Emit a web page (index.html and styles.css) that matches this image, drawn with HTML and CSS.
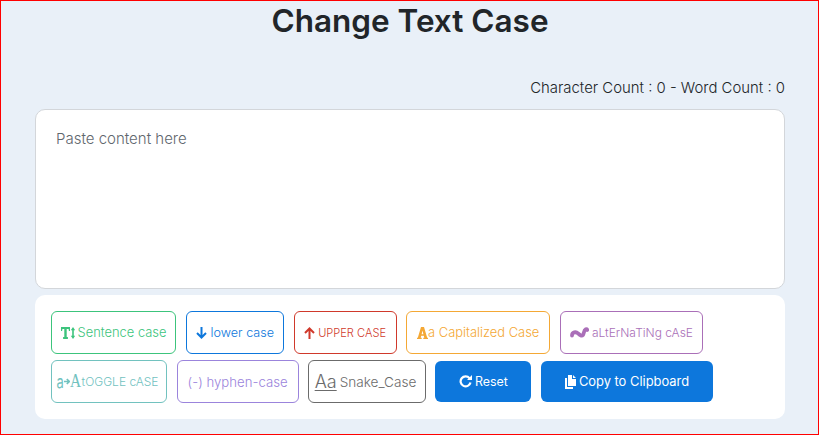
FILE: index.html
```html
<!DOCTYPE html>
<html lang="en">

<head>
  <meta charset="UTF-8">
  <title>Change Text Case</title>
  <link rel="stylesheet" href="styles.css">
</head>

<body>
  <div class="container">
    <h1>Change Text Case</h1>
    <p class="counts">Character Count : 0 - Word Count : 0</p>
    <textarea class="content-box" placeholder="Paste content here"></textarea>

    <div class="tools">
      <button class="btn sentence">
        <svg class="icon" width="14" height="12" viewBox="0 0 14 12"><path fill="currentColor" d="M0 0h9v4H7.900L7.600 2H5.700v8h1.200v2H2.100v-2h1.200V2H1.400L1.100 4H0zM12 0l2.200 3.200h-1.400v5.600h1.400L12 12l-2.200-3.200h1.400V3.200H9.800z"/></svg>
        Sentence case
      </button>
      <button class="btn lower">
        <svg class="icon" width="11" height="12" viewBox="0 0 11 12"><path fill="none" stroke="currentColor" stroke-width="2" d="M5.500 0v10.500M1 6l4.500 4.500L10 6"/></svg>
        lower case
      </button>
      <button class="btn upper">
        <svg class="icon" width="11" height="12" viewBox="0 0 11 12"><path fill="none" stroke="currentColor" stroke-width="2" d="M5.500 12V1.500M1 6l4.500-4.500L10 6"/></svg>
        UPPER CASE
      </button>
      <button class="btn capital">
        <svg class="icon" width="11" height="12" viewBox="0 0 11 12"><path fill="currentColor" fill-rule="evenodd" d="M0 12v-1.300h.8L4 0h3l3.200 10.700h.8V12H6.300v-1.300h1L6.800 8.800H4.200l-.5 1.900h1V12zM4.600 7.200h1.800L5.500 3.500z"/></svg>
        a Capitalized Case
      </button>
      <button class="btn alternating">
        <svg class="icon" width="19" height="11" viewBox="0 0 19 11"><path fill="none" stroke="currentColor" stroke-width="3.800" stroke-linecap="round" d="M2 8.500C2 5 6 4.500 8 6.300c1.600 1.500 3.500 3.300 5 1.700 1-1.200.6-4.700 2.800-5.800.8-.3 1.400 0 1.400.8"/></svg>
        aLtErNaTiNg cAsE
      </button>
      <button class="btn toggle">
        <span class="swap"><span class="swap-small">a</span><svg width="6" height="7" viewBox="0 0 6 7"><path fill="none" stroke="currentColor" stroke-width="1.600" d="M0 3.500h5M2.800 1l2.500 2.500L2.800 6"/></svg><span class="swap-big">A</span></span>tOGGLE cASE
      </button>
      <button class="btn hyphen">(-) hyphen-case</button>
      <button class="btn snake">
        <span class="under">Aa</span>
        Snake_Case
      </button>
      <button class="btn solid reset">
        <svg class="icon" width="13" height="13" viewBox="0 0 13 13"><path fill="none" stroke="currentColor" stroke-width="2.200" d="M10.500 3.200A5 5 0 1 0 11.500 7.500"/><path fill="currentColor" d="M8 5h5V0z"/></svg>
        Reset
      </button>
      <button class="btn solid copy">
        <svg class="icon" width="11" height="14" viewBox="0 0 11 14"><path fill="currentColor" d="M3 0h4v4h4v7H3zM8 0l3 3H8zM0 3h2v9h6v2H0z"/></svg>
        Copy to Clipboard
      </button>
    </div>
  </div>
</body>

</html>
```

FILE: styles.css
```css
* {
  box-sizing: border-box;
}

body {
  margin: 0;
  height: 435px;
  overflow: hidden;
  background: #e9f0f8;
  border: 1px solid #ff0000;
  font-family: Inter, "Open Sans", sans-serif;
  color: #212529;
}

.container {
  padding: 0 33px 0 34px;
}

h1 {
  margin: 0;
  height: 74px;
  padding-top: 1px;
  text-align: center;
  font-size: 31.5px;
  line-height: 38px;
  font-weight: 600;
  color: #212529;
}

.counts {
  margin: 0;
  height: 34px;
  text-align: right;
  font-size: 14.9px;
  font-weight: 300;
  line-height: 26px;
}

.content-box {
  display: block;
  width: 100%;
  height: 180px;
  padding: 19px 20px;
  resize: none;
  background: #fff;
  border: 1px solid #d3d6da;
  border-radius: 10px;
  font-family: inherit;
  font-size: 15px;
  font-weight: 300;
  line-height: 20px;
  outline: none;
}

.content-box::placeholder {
  color: #5f676e;
  opacity: 1;
}

.tools {
  display: flex;
  flex-wrap: wrap;
  gap: 6px 9.6px;
  margin-top: 6px;
  height: 124px;
  padding: 16px;
  background: #fff;
  border-radius: 10px;
  align-content: flex-start;
}

.btn {
  display: flex;
  align-items: center;
  justify-content: center;
  gap: 3px;
  height: 43px;
  padding: 0;
  background: #fff;
  border: 1px solid currentColor;
  border-radius: 6px;
  font-family: inherit;
  font-size: 12.9px;
  font-weight: 300;
  white-space: nowrap;
}

.icon {
  flex: none;
}

.sentence { width: 125px; color: #3cc47c; }
.lower { width: 98.4px; color: #0d77dc; font-size: 12.6px; gap: 4px; }
.upper { width: 103px; color: #d0392b; font-size: 11.1px; gap: 3px; }
.capital { width: 144px; color: #f4a835; gap: 0; }
.alternating { width: 143.5px; color: #aa6fb8; font-size: 12px; }
.toggle { width: 116px; color: #72c2bf; gap: 1px; font-size: 12px; padding-right: 3px; }
.hyphen { width: 122px; color: #9b84dc; font-size: 13.2px; }
.snake { width: 117.6px; color: #6b6b6b; font-size: 13.6px; padding-right: 3px; }

.swap {
  display: flex;
  align-items: center;
  font-weight: 400;
}

.swap-small {
  font-size: 18px;
  transform: scaleX(0.72);
  margin: 0 -1.500px;
}

.swap-big {
  font-family: "Liberation Serif", serif;
  font-size: 18px;
  transform: scaleX(0.85);
  margin: 0 -1px;
}

.under {
  font-size: 18px;
  text-decoration: underline;
  text-underline-offset: 2px;
  text-decoration-thickness: 1px;
}

.solid {
  background: #0d77dc;
  border: 0;
  color: #fff;
  font-weight: 400;
  font-size: 12.4px;
  gap: 3px;
  height: 41px;
  margin-top: 1px;
}

.reset { width: 96px; }
.copy { width: 172px; font-size: 12.9px; }
```
